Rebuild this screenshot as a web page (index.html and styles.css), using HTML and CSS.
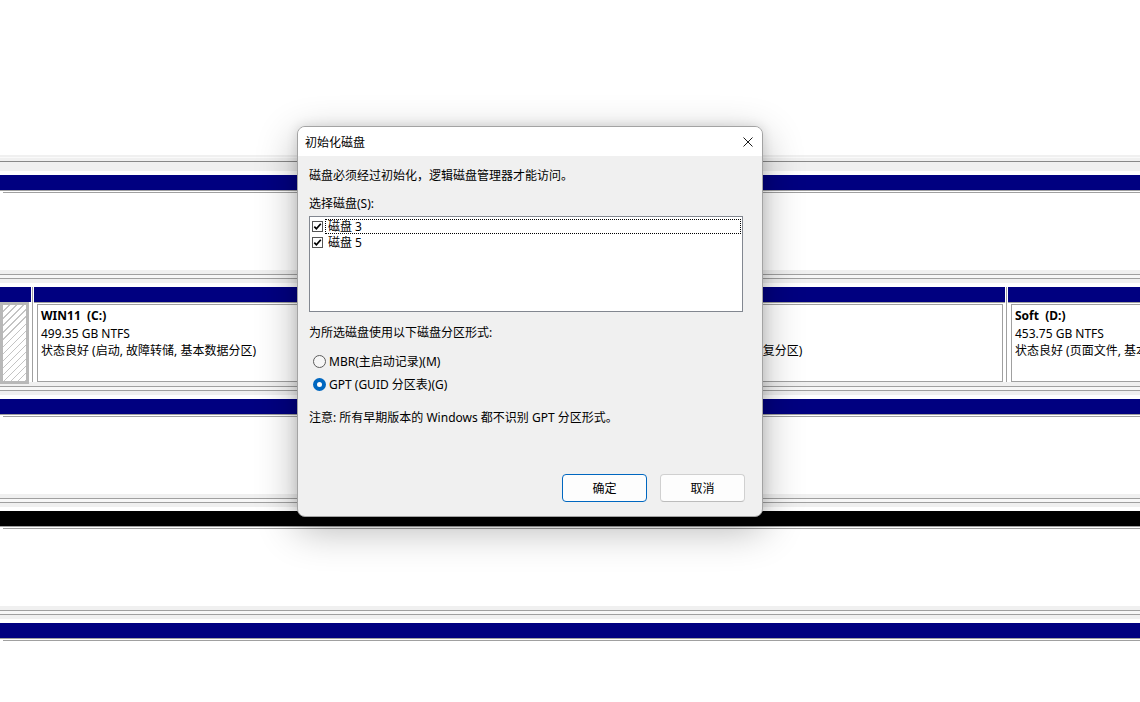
FILE: index.html
```html
<!DOCTYPE html>
<html>
	<head>
		<meta charset="UTF-8">
		<title>初始化磁盘</title>
		<link rel="stylesheet" href="styles.css">
	</head>
	<body>
		<div class="pane">
			<div class="top-gap"></div>
			<div class="parts">
				<div class="part wide">
					<div class="bar"></div>
					<div class="pbody"><div class="box"></div></div>
				</div>
			</div>
			<div class="gap"></div>
			<div class="parts">
				<div class="part p-a">
					<div class="bar"></div>
					<div class="pbody"><div class="hatch"></div></div>
				</div>
				<div class="vsep"></div>
				<div class="part p-b">
					<div class="bar"></div>
					<div class="pbody">
						<div class="box">
							<div class="name">WIN11&nbsp; (C:)</div>
							<div>499.35 GB NTFS</div>
							<div>状态良好 (启动, 故障转储, 基本数据分区)</div>
						</div>
					</div>
				</div>
				<div class="vsep"></div>
				<div class="part p-c">
					<div class="bar"></div>
					<div class="pbody">
						<div class="box">
							<div class="name">&nbsp;</div>
							<div>529 MB</div>
							<div>状态良好 (恢复分区)</div>
						</div>
					</div>
				</div>
				<div class="vsep"></div>
				<div class="part p-d">
					<div class="bar"></div>
					<div class="pbody">
						<div class="box">
							<div class="name">Soft&nbsp; (D:)</div>
							<div>453.75 GB NTFS</div>
							<div>状态良好 (页面文件, 基本数据分区)</div>
						</div>
					</div>
				</div>
			</div>
			<div class="gap"></div>
			<div class="parts">
				<div class="part wide">
					<div class="bar"></div>
					<div class="pbody"><div class="box"></div></div>
				</div>
			</div>
			<div class="gap"></div>
			<div class="parts">
				<div class="part wide">
					<div class="bar free"></div>
					<div class="pbody"><div class="box"></div></div>
				</div>
			</div>
			<div class="gap"></div>
			<div class="parts">
				<div class="part wide">
					<div class="bar"></div>
					<div class="pbody"><div class="box"></div></div>
				</div>
			</div>
		</div>

		<div class="dialog">
			<div class="titlebar">
				<span>初始化磁盘</span>
				<svg class="close" width="10" height="10" viewBox="0 0 10 10">
					<path d="M0.5 0.5 L9.5 9.5 M9.5 0.5 L0.5 9.5" stroke="#1a1a1a" stroke-width="1" fill="none"/>
				</svg>
			</div>
			<div class="dlg-body">
				<div class="line intro">磁盘必须经过初始化，逻辑磁盘管理器才能访问。</div>
				<div class="line pick">选择磁盘(S):</div>
				<div class="listbox">
					<div class="item">
						<span class="check">
							<svg width="9" height="9" viewBox="0 0 9 9"><path d="M1.3 4.6 L3.4 6.8 L7.8 1.8" stroke="#000" stroke-width="1.7" fill="none"/></svg>
						</span>
						<span class="item-text focus">磁盘 3</span>
					</div>
					<div class="item">
						<span class="check">
							<svg width="9" height="9" viewBox="0 0 9 9"><path d="M1.3 4.6 L3.4 6.8 L7.8 1.8" stroke="#000" stroke-width="1.7" fill="none"/></svg>
						</span>
						<span class="item-text">磁盘 5</span>
					</div>
				</div>
				<div class="line style-label">为所选磁盘使用以下磁盘分区形式:</div>
				<div class="radio-row r1"><span class="radio"></span>MBR(主启动记录)(M)</div>
				<div class="radio-row r2"><span class="radio on"></span>GPT (GUID 分区表)(G)</div>
				<div class="line note">注意: 所有早期版本的 Windows 都不识别 GPT 分区形式。</div>
				<div class="buttons">
					<button class="btn primary">确定</button>
					<button class="btn">取消</button>
				</div>
			</div>
		</div>
	</body>
</html>
```

FILE: styles.css
```css
html, body{
	margin: 0;
}
body{
	position: relative;
	width: 1140px;
	height: 702px;
	overflow: hidden;
	background: #fff;
	font-family: "Noto Sans", "Noto Sans CJK SC", sans-serif;
	font-size: 12px;
	color: #000;
}

/* disk rows behind the dialog */
.pane{
	width: 1400px;
	padding-top: 155px;
}
.top-gap{
	height: 20px;
	background: linear-gradient(to bottom, #f0f0f0 0 2px, #fafafa 2px 3px, #f0f0f0 3px 6px, #888 6px 7px, #f0f0f0 7px 16px, #fff 16px);
}
.gap{
	height: 17px;
	background: linear-gradient(to bottom, #f0f0f0 0 4px, #a0a0a0 4px 5px, #f7f7f7 5px 8px, #a0a0a0 8px 9px, #f0f0f0 9px 13px, #fff 13px);
}
.parts{
	display: flex;
	height: 95px;
	background: #fff;
}
.part{
	display: flex;
	flex-direction: column;
}
.bar{
	height: 15px;
	background: #000080;
}
.bar.free{
	background: #000;
}
.pbody{
	height: 80px;
	box-sizing: border-box;
	border-top: 1px solid #a0a0a0;
	padding: 1px 2px 0 3px;
}
.box{
	height: 78px;
	box-sizing: border-box;
	border: 1px solid #a0a0a0;
	padding: 2px 3px;
	line-height: 17.5px;
	white-space: nowrap;
	overflow: hidden;
}
.name{
	font-weight: bold;
}
.wide{
	flex: 1;
}
.wide .box{
	border-left: 0;
	border-right: 0;
	border-bottom: 0;
}
.vsep{
	width: 3px;
	background: linear-gradient(to right, #fff 0 1px, #a0a0a0 1px 2px, #fff 2px);
}
.p-a{
	width: 31px;
}
.p-a .pbody{
	border-top: 0;
	padding: 0 2px 0 0;
}
.hatch{
	height: 82px;
	box-sizing: border-box;
	border: 3px solid #b8b8b8;
	background: repeating-linear-gradient(135deg, #fff 0 4px, #c4c4c4 4px 5px);
}
.p-b{
	width: 652px;
}
.p-c{
	width: 316px;
}
.p-d{
	flex: 1;
}

/* dialog */
.dialog{
	position: absolute;
	left: 297px;
	top: 126px;
	width: 466px;
	height: 391px;
	box-sizing: border-box;
	border: 1px solid #a3a3a3;
	border-radius: 8px;
	background: #f0f0f0;
	overflow: hidden;
	box-shadow: 0 12px 40px rgba(0,0,0,0.3), 0 0 12px rgba(0,0,0,0.12);
	display: flex;
	flex-direction: column;
}
.titlebar{
	height: 29px;
	background: #fff;
	display: flex;
	align-items: center;
	justify-content: space-between;
	padding: 0 9px 0 7px;
}
.dlg-body{
	padding: 0 17px 0 11px;
	display: flex;
	flex-direction: column;
}
.line{
	line-height: 16px;
	white-space: nowrap;
}
.intro{
	margin-top: 12px;
}
.pick{
	margin-top: 12px;
}
.listbox{
	margin-top: 4px;
	width: 434px;
	height: 96px;
	box-sizing: border-box;
	border: 1px solid #828790;
	background: #fff;
	padding: 1px;
}
.item{
	display: flex;
	align-items: center;
	height: 16px;
}
.check{
	width: 11px;
	height: 11px;
	box-sizing: border-box;
	margin-left: 1px;
	border: 1px solid #555;
	background: #fff;
	display: flex;
	align-items: center;
	justify-content: center;
}
.item-text{
	flex: 1;
	height: 15px;
	box-sizing: border-box;
	margin-left: 2px;
	padding-left: 2px;
	line-height: 13px;
	border: 1px dotted transparent;
}
.item-text.focus{
	border-color: #000;
}
.style-label{
	margin-top: 13px;
}
.radio-row{
	display: flex;
	align-items: center;
	height: 16px;
	white-space: nowrap;
}
.r1{
	margin-top: 12px;
}
.r2{
	margin-top: 7px;
}
.radio{
	width: 13px;
	height: 13px;
	box-sizing: border-box;
	margin: 0 3px 0 4px;
	border-radius: 50%;
	border: 1px solid #5c5c5c;
	background: #f6f6f6;
}
.radio.on{
	border: 4px solid #0067c0;
	background: #fff;
}
.note{
	margin-top: 18px;
}
.buttons{
	margin-top: 48px;
	display: flex;
	justify-content: flex-end;
	gap: 13px;
}
.btn{
	width: 85px;
	height: 28px;
	padding: 0;
	box-sizing: border-box;
	border: 1px solid #d0d0d0;
	border-bottom-color: #bcbcbc;
	border-radius: 4px;
	background: #fdfdfd;
	font-family: inherit;
	font-size: 12px;
	color: #000;
}
.btn.primary{
	border: 1px solid #0067c0;
}
```
